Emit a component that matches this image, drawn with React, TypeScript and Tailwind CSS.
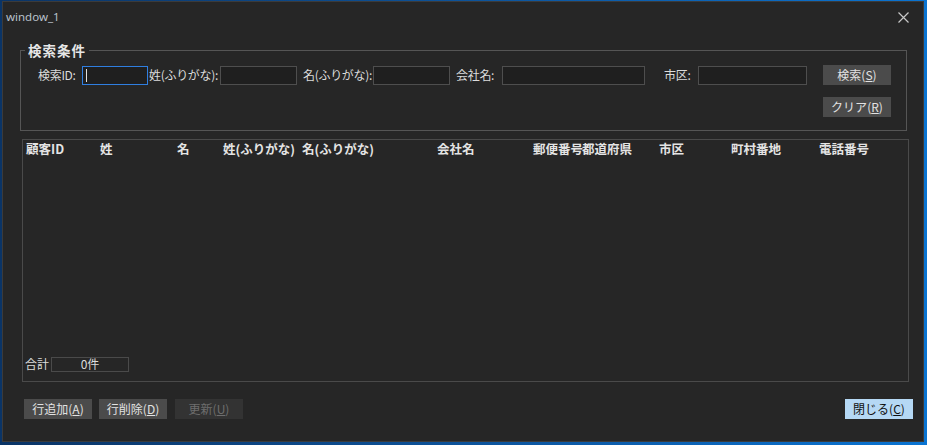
const jp = "font-['MS_UI_Gothic','Noto_Sans_CJK_JP',sans-serif]";

const headers: { label: string; w: string }[] = [
  { label: "顧客ID", w: "w-[74px]" },
  { label: "姓", w: "w-[77px]" },
  { label: "名", w: "w-[46px]" },
  { label: "姓(ふりがな)", w: "w-[79px]" },
  { label: "名(ふりがな)", w: "w-[135px]" },
  { label: "会社名", w: "w-[96px]" },
  { label: "郵便番号", w: "w-[49px]" },
  { label: "都道府県", w: "w-[77px]" },
  { label: "市区", w: "w-[72px]" },
  { label: "町村番地", w: "w-[88px]" },
  { label: "電話番号", w: "w-[80px]" },
];

function Btn({
  text,
  mn,
  disabled,
  primary,
}: {
  text: string;
  mn: string;
  disabled?: boolean;
  primary?: boolean;
}) {
  const tone = primary
    ? "bg-[#b5d8f4] text-[#111]"
    : disabled
      ? "bg-[#333333] text-[#6e6e6e]"
      : "bg-[#4b4b4b] text-[#e2e2e2]";
  return (
    <button
      className={`flex h-[20px] w-[68px] items-center justify-center text-[12px] leading-none ${tone}`}
    >
      {text}(<u>{mn}</u>)
    </button>
  );
}

function Field({ label, lw, iw, ml, focus }: { label: string; lw: string; iw: string; ml: string; focus?: boolean }) {
  return (
    <div className={`flex shrink-0 items-center ${ml}`}>
      <span className={`${lw} shrink-0 whitespace-nowrap text-[12px] tracking-[-0.3px] text-[#dcdcdc]`}>{label}</span>
      <div
        className={`flex h-[19px] ${iw} shrink-0 items-center border bg-[#1f1f1f] ${
          focus ? "border-[#2f7ee0]" : "border-[#4e4e4e]"
        }`}
      >
        {focus && <span className="ml-[3px] h-[13px] w-[1px] bg-[#e0e0e0]" />}
      </div>
    </div>
  );
}

export default function App() {
  return (
    <div className={`flex h-[445px] w-[927px] bg-gradient-to-r from-[#0a3466] to-[#0a74d2] pl-[2px] pt-[1px] ${jp}`}>
      <div className="flex h-[441px] w-[922px] flex-col border border-[#3b3b3b] bg-[#262626]">
        {/* title bar */}
        <div className="flex h-[30px] items-center justify-between pl-[3px] pr-[14px]">
          <span className="font-['Noto_Sans',sans-serif] text-[11.5px] text-[#b9c2cc]">window_1</span>
          <svg width="11" height="11" viewBox="0 0 11 11" className="text-[#c8c8c8]">
            <path d="M0.5 0.5 L10.5 10.5 M10.5 0.5 L0.5 10.5" stroke="currentColor" strokeWidth="1.2" />
          </svg>
        </div>

        {/* search conditions */}
        <fieldset className="ml-[17px] mt-[10px] w-[887px] border border-[#555555] pb-[13px] pl-[17px]">
          <legend className="ml-[-13px] px-[3px] text-[13.5px] font-bold leading-[16px] tracking-[1px] text-[#e6e6e6]">
            検索条件
          </legend>
          <div className="mt-[7px] flex items-center">
            <Field label="検索ID:" lw="w-[44px]" iw="w-[66px]" ml="" focus />
            <Field label="姓(ふりがな):" lw="w-[71px]" iw="w-[77px]" ml="ml-[1px]" />
            <Field label="名(ふりがな):" lw="w-[70px]" iw="w-[77px]" ml="ml-[6px]" />
            <Field label="会社名:" lw="w-[46px]" iw="w-[143px]" ml="ml-[6px]" />
            <Field label="市区:" lw="w-[34px]" iw="w-[109px]" ml="ml-[19px]" />
            <div className="ml-[16px]">
              <Btn text="検索" mn="S" />
            </div>
          </div>
          <div className="mt-[12px] flex pl-[785px]">
            <Btn text="クリア" mn="R" />
          </div>
        </fieldset>

        {/* result grid */}
        <div className="ml-[19px] mt-[8px] flex h-[243px] w-[887px] flex-col border border-[#4a4a4a]">
          <div className="flex pl-[3px] pt-[1px] text-[12.5px] font-bold leading-[16px] text-[#e4e4e4]">
            {headers.map((h) => (
              <span key={h.label} className={`${h.w} shrink-0 whitespace-nowrap`}>
                {h.label}
              </span>
            ))}
          </div>
          <div className="flex-1" />
          <div className="mb-[8px] flex items-center pl-[2px]">
            <span className="w-[26px] text-[12px] text-[#dcdcdc]">合計</span>
            <div className="flex h-[15px] w-[78px] items-center justify-center border border-[#4a4a4a] text-[12px] text-[#dcdcdc]">
              0件
            </div>
          </div>
        </div>

        {/* footer buttons */}
        <div className="ml-[21px] mr-[10px] mt-[17px] flex items-center">
          <Btn text="行追加" mn="A" />
          <div className="ml-[7px]">
            <Btn text="行削除" mn="D" />
          </div>
          <div className="ml-[8px]">
            <Btn text="更新" mn="U" disabled />
          </div>
          <div className="ml-auto">
            <Btn text="閉じる" mn="C" primary />
          </div>
        </div>
      </div>
    </div>
  );
}
